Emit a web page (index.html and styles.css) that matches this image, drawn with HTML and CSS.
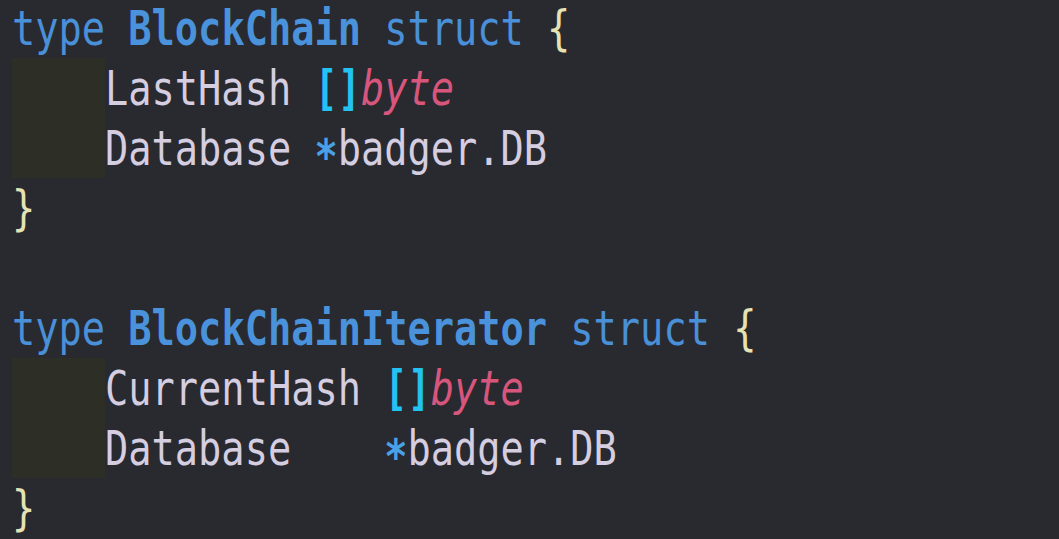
FILE: index.html
```html
<!DOCTYPE html>
<html lang="en">
<head>
<meta charset="utf-8">
<title>BlockChain</title>
<link rel="stylesheet" href="styles.css">
</head>
<body>
<div class="editor">
  <div class="code">
    <div class="line"><span class="kw">type</span> <span class="tn">BlockChain</span> <span class="kw">struct</span> <span class="br">{</span></div>
    <div class="line"><span class="guide"></span><span class="fld">LastHash</span> <span class="sq">[]</span><span class="ty">byte</span></div>
    <div class="line"><span class="guide"></span><span class="fld">Database</span> <span class="op">*</span><span class="fld">badger.DB</span></div>
    <div class="line"><span class="br">}</span></div>
    <div class="line"></div>
    <div class="line"><span class="kw">type</span> <span class="tn">BlockChainIterator</span> <span class="kw">struct</span> <span class="br">{</span></div>
    <div class="line"><span class="guide"></span><span class="fld">CurrentHash</span> <span class="sq">[]</span><span class="ty">byte</span></div>
    <div class="line"><span class="guide"></span><span class="fld">Database</span>    <span class="op">*</span><span class="fld">badger.DB</span></div>
    <div class="line"><span class="br">}</span></div>
  </div>
</div>
</body>
</html>
```

FILE: styles.css
```css
html, body {
  margin: 0;
  padding: 0;
  background: #282a2f;
  overflow: hidden;
}

.editor {
  width: 1059px;
  height: 539px;
  padding-left: 12px;
  box-sizing: border-box;
  overflow: hidden;
}

.code {
  margin-top: -2px;
  font-family: "DejaVu Sans Mono", "Liberation Mono", monospace;
  font-size: 48px;
  line-height: 60px;
  color: #d5cde0;
  transform: scaleX(0.805);
  transform-origin: 0 0;
  width: 1300px;
}

.line {
  display: block;
  height: 60px;
  white-space: pre;
}

.guide {
  display: inline-block;
  vertical-align: top;
  width: 4ch;
  height: 60px;
  background: #2d2e25;
}

.kw {
  color: #4a90d8;
}

.tn {
  color: #4a92dc;
  font-weight: bold;
}

.br {
  color: #e6e2b4;
}

.fld {
  color: #d5cde0;
}

.sq {
  color: #22c2f2;
  font-weight: bold;
}

.ty {
  color: #d8557c;
  font-style: italic;
}

.op {
  color: #4aa0e6;
  font-weight: bold;
  vertical-align: -0.17em;
  line-height: 0;
}
```
